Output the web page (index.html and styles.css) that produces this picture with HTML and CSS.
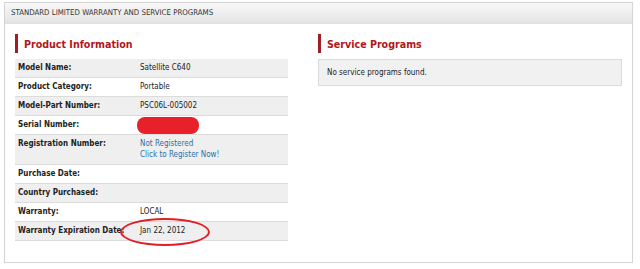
FILE: index.html
```html
<!DOCTYPE html>
<html lang="en">
<head>
  <meta charset="UTF-8" />
  <title>Standard Limited Warranty and Service Programs</title>
  <link rel="stylesheet" href="styles.css">
</head>
<body>
  <div class="panel">
    <div class="panel-head">STANDARD LIMITED WARRANTY AND SERVICE PROGRAMS</div>
    <div class="panel-body">
      <div class="col col-left">
        <h2 class="section-title">Product Information</h2>
        <table class="info">
          <tr><th>Model Name:</th><td>Satellite C640</td></tr>
          <tr><th>Product Category:</th><td>Portable</td></tr>
          <tr><th>Model-Part Number:</th><td>PSC06L-005002</td></tr>
          <tr><th>Serial Number:</th><td><span class="redact"></span></td></tr>
          <tr class="tall"><th>Registration Number:</th><td><a href="#">Not Registered</a><br><a href="#">Click to Register Now!</a></td></tr>
          <tr><th>Purchase Date:</th><td></td></tr>
          <tr><th>Country Purchased:</th><td></td></tr>
          <tr><th>Warranty:</th><td>LOCAL</td></tr>
          <tr><th>Warranty Expiration Date:</th><td><span class="circled">Jan 22, 2012</span></td></tr>
        </table>
      </div>
      <div class="col col-right">
        <h2 class="section-title">Service Programs</h2>
        <div class="empty-box">No service programs found.</div>
      </div>
    </div>
  </div>
</body>
</html>
```

FILE: styles.css
```css
body {
  margin: 0;
  font-family: 'DejaVu Sans Condensed', 'DejaVu Sans', sans-serif;
  font-size: 8px;
  color: #222;
  background: #fff;
}
.panel {
  margin: 2px 7px 0 4px;
  height: 261px;
  border: 1px solid #d4d4d4;
  box-sizing: border-box;
}
.panel-head {
  height: 20px;
  line-height: 20px;
  padding-left: 6px;
  background: linear-gradient(to bottom, #f8f8f8, #e4e4e4);
  border-bottom: 1px solid #e0e0e0;
  color: #333;
  font-size: 7.8px;
}
.panel-body {
  display: flex;
  gap: 30px;
  padding: 10px 10px 0 10px;
}
.col-left {
  width: 273px;
}
.col-right {
  flex: 1;
}
.section-title {
  margin: 0 0 6px 0;
  height: 19px;
  line-height: 21px;
  border-left: 3px solid #a51d24;
  padding-left: 6px;
  color: #b3151c;
  font-size: 10.6px;
  font-weight: bold;
}
.info {
  width: 100%;
  border-collapse: collapse;
  table-layout: fixed;
}
.info th, .info td {
  text-align: left;
  vertical-align: top;
  padding: 4px 3px;
  height: 10px;
  line-height: 10px;
  border-bottom: 1px solid #dcdcdc;
  white-space: nowrap;
  overflow: visible;
}
.info th {
  width: 116px;
  font-weight: bold;
  color: #222;
}
.info tr.tall td {
  line-height: 10.5px;
}
.info tr:nth-child(odd) {
  background: #efefef;
}
.info a {
  color: #2a6fa8;
  text-decoration: none;
}
.redact {
  display: inline-block;
  width: 62px;
  height: 17px;
  margin: -3px 0 -4px -3px;
  background: #e8202a;
  border-radius: 8px;
  vertical-align: top;
}
.circled {
  position: relative;
}
.circled::before {
  content: "";
  position: absolute;
  left: -20px;
  top: -8px;
  width: 86px;
  height: 24px;
  border: 2px solid #e21e26;
  border-radius: 50%;
}
.empty-box {
  margin-top: 3px;
  padding: 8px 8px 7px;
  background: #f1f1f1;
  border: 1px solid #dadada;
  line-height: 10px;
}
```
